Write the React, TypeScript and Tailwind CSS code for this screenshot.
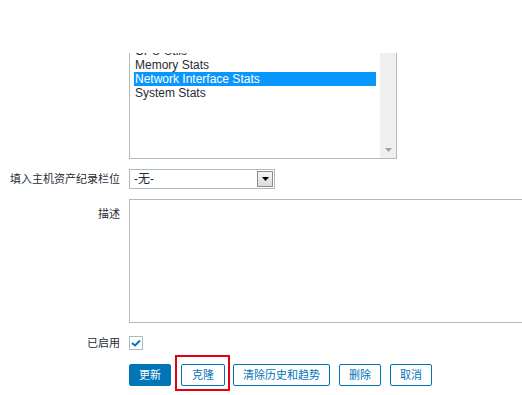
import React from 'react';

const font = { fontFamily: '"Liberation Sans", Arial, "Noto Sans CJK SC", sans-serif' };

const items = ['CPU Utils', 'Memory Stats', 'Network Interface Stats', 'System Stats'];

const btn = 'h-[22px] px-[9px] border border-[#0275b8] text-[#0275b8] rounded-[2px] bg-white text-[11px]';

const App: React.FC = () => {
  return (
    <div className="w-[522px] h-[395px] bg-white overflow-hidden text-[12px] text-[#1f2c33]" style={font}>
      <div className="grid grid-cols-[120px_1fr] gap-x-[9px] pt-[53px]">
        {/* templates listbox */}
        <div />
        <div className="w-[268px] h-[106px] border-x border-b border-[#acbbbb] flex overflow-hidden">
          <div className="flex-1 pl-[4px] pr-[4px] -mt-[9px]">
            {items.map((it) => (
              <div
                key={it}
                className={
                  'h-[14px] leading-[14px] pl-[1px] ' +
                  (it === 'Network Interface Stats' ? 'bg-[#0a97fb] text-white' : '')
                }
              >
                {it}
              </div>
            ))}
          </div>
          <div className="w-[16px] bg-[#efefef] flex flex-col justify-end items-center pb-[6px]">
            <svg width="7" height="4" viewBox="0 0 7 4">
              <path d="M0 0h7L3.5 4z" fill="#a0a0a0" />
            </svg>
          </div>
        </div>

        {/* inventory */}
        <div className="mt-[10px] h-[20px] flex items-center justify-end text-[11px]">填入主机资产纪录栏位</div>
        <div className="mt-[10px] w-[146px] h-[20px] border border-[#acbbbb] flex items-center">
          <span className="flex-1 pl-[4px]">-无-</span>
          <span className="w-[16px] h-[16px] mr-[1px] border border-[#8c8c8c] bg-gradient-to-b from-[#f6f6f6] to-[#dcdcdc] flex items-center justify-center">
            <svg width="7" height="4" viewBox="0 0 7 4">
              <path d="M0 0h7L3.5 4z" fill="#000" />
            </svg>
          </span>
        </div>

        {/* description */}
        <div className="mt-[10px] pt-[7px] text-right text-[11px]">描述</div>
        <div className="mt-[10px] h-[124px] border border-r-0 border-[#acbbbb]" />

        {/* enabled */}
        <div className="mt-[13px] h-[14px] leading-[14px] text-right text-[11px]">已启用</div>
        <div className="mt-[13px]">
          <div className="w-[14px] h-[14px] border border-[#acbbbb] flex items-center justify-center">
            <svg width="10" height="8" viewBox="0 0 10 8">
              <path d="M1 4l3 2.5L9 1.5" stroke="#0275b8" strokeWidth="2" fill="none" />
            </svg>
          </div>
        </div>

        {/* buttons */}
        <div />
        <div className="mt-[14px] flex items-center">
          <button className="h-[22px] px-[9px] bg-[#0275b8] border border-[#0275b8] text-white rounded-[2px] text-[11px]">更新</button>
          <div className="relative ml-[10px]">
            <button className={btn + ' px-[10px]'}>克隆</button>
            <div className="absolute -top-[9px] -left-[6px] -right-[5px] -bottom-[5px] border-2 border-[#e4000f] pointer-events-none" />
          </div>
          <button className={btn + ' ml-[8px]'}>清除历史和趋势</button>
          <button className={btn + ' ml-[9px]'}>删除</button>
          <button className={btn + ' ml-[9px]'}>取消</button>
        </div>
      </div>
    </div>
  );
};

export default App;
